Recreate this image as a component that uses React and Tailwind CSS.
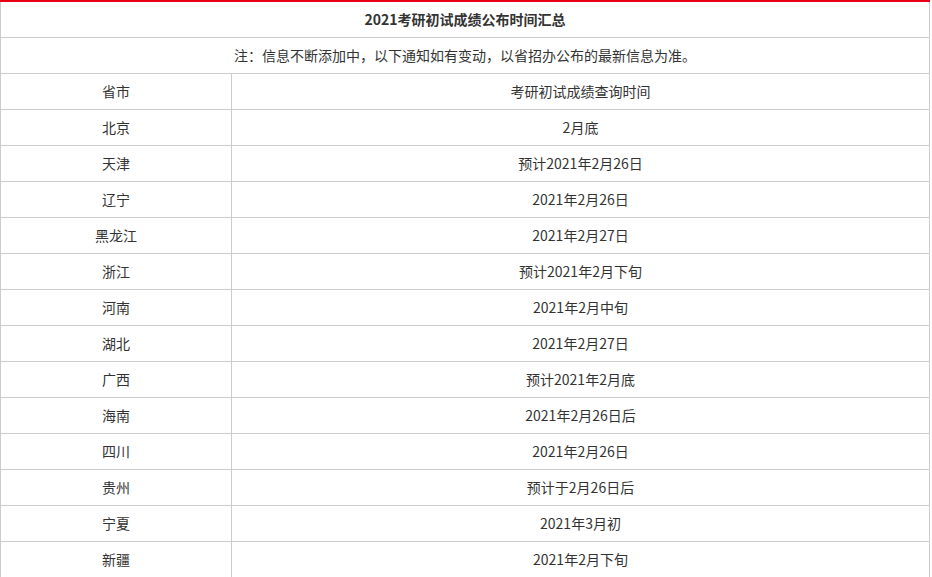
const rows = [
  ['北京', '2月底'],
  ['天津', '预计2021年2月26日'],
  ['辽宁', '2021年2月26日'],
  ['黑龙江', '2021年2月27日'],
  ['浙江', '预计2021年2月下旬'],
  ['河南', '2021年2月中旬'],
  ['湖北', '2021年2月27日'],
  ['广西', '预计2021年2月底'],
  ['海南', '2021年2月26日后'],
  ['四川', '2021年2月26日'],
  ['贵州', '预计于2月26日后'],
  ['宁夏', '2021年3月初'],
  ['新疆', '2021年2月下旬'],
];

const cell = 'border border-[#cccccc] text-center align-middle p-0';

export default function App() {
  return (
    <div className="bg-white w-[932px] h-[577px] overflow-hidden font-['Noto_Sans_CJK_SC','Microsoft_YaHei',sans-serif] text-[14px] text-[#333333]">
      <table className="w-[930px] border-collapse table-fixed border-t-2 border-t-[#e60012]">
        <colgroup>
          <col className="w-[231px]" />
          <col />
        </colgroup>
        <tbody>
          <tr className="h-[36px]">
            <td colSpan={2} className={`${cell} border-t-0 font-bold`}>
              2021考研初试成绩公布时间汇总
            </td>
          </tr>
          <tr className="h-[36px]">
            <td colSpan={2} className={cell}>
              注：信息不断添加中，以下通知如有变动，以省招办公布的最新信息为准。
            </td>
          </tr>
          <tr className="h-[36px]">
            <td className={cell}>省市</td>
            <td className={cell}>考研初试成绩查询时间</td>
          </tr>
          {rows.map(([p, t]) => (
            <tr key={p} className="h-[36px]">
              <td className={cell}>{p}</td>
              <td className={cell}>{t}</td>
            </tr>
          ))}
        </tbody>
      </table>
    </div>
  );
}
